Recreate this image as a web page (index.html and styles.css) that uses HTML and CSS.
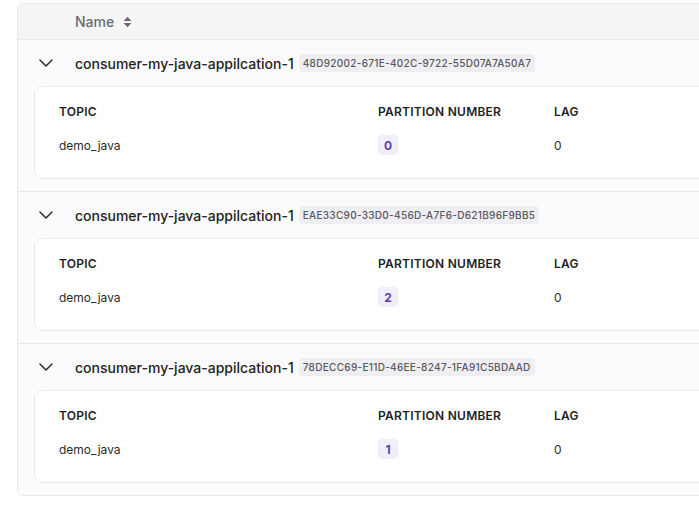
FILE: index.html
```html
<!DOCTYPE html>
<html>
<head>
<meta charset="utf-8">
<link rel="stylesheet" href="styles.css">
</head>
<body>
<div class="table">
  <div class="thead">
    <span class="th-name">Name</span>
    <svg class="sort" width="9" height="12" viewBox="0 0 9 12"><path d="M4.5 0.8 L8.4 5 H0.6 Z M4.5 11.2 L8.4 7 H0.6 Z" fill="#6b6b70"/></svg>
  </div>

  <div class="group">
    <div class="group-head">
      <svg class="chev" width="14" height="8" viewBox="0 0 14 8"><path d="M1 1 L7 7 L13 1" fill="none" stroke="#2b2b2e" stroke-width="1.5" stroke-linecap="round" stroke-linejoin="round"/></svg>
      <span class="gname">consumer-my-java-appilcation-1</span>
      <span class="gid">48D92002-671E-402C-9722-55D07A7A50A7</span>
    </div>
    <div class="card">
      <div class="row head"><span>TOPIC</span><span>PARTITION NUMBER</span><span>LAG</span></div>
      <div class="row body"><span>demo_java</span><span><span class="pbadge">0</span></span><span>0</span></div>
    </div>
  </div>

  <div class="group">
    <div class="group-head">
      <svg class="chev" width="14" height="8" viewBox="0 0 14 8"><path d="M1 1 L7 7 L13 1" fill="none" stroke="#2b2b2e" stroke-width="1.5" stroke-linecap="round" stroke-linejoin="round"/></svg>
      <span class="gname">consumer-my-java-appilcation-1</span>
      <span class="gid">EAE33C90-33D0-456D-A7F6-D621B96F9BB5</span>
    </div>
    <div class="card">
      <div class="row head"><span>TOPIC</span><span>PARTITION NUMBER</span><span>LAG</span></div>
      <div class="row body"><span>demo_java</span><span><span class="pbadge">2</span></span><span>0</span></div>
    </div>
  </div>

  <div class="group">
    <div class="group-head">
      <svg class="chev" width="14" height="8" viewBox="0 0 14 8"><path d="M1 1 L7 7 L13 1" fill="none" stroke="#2b2b2e" stroke-width="1.5" stroke-linecap="round" stroke-linejoin="round"/></svg>
      <span class="gname">consumer-my-java-appilcation-1</span>
      <span class="gid">78DECC69-E11D-46EE-8247-1FA91C5BDAAD</span>
    </div>
    <div class="card">
      <div class="row head"><span>TOPIC</span><span>PARTITION NUMBER</span><span>LAG</span></div>
      <div class="row body"><span>demo_java</span><span><span class="pbadge">1</span></span><span>0</span></div>
    </div>
  </div>
</div>
</body>
</html>
```

FILE: styles.css
```css
html, body {
  margin: 0;
  padding: 0;
  background: #ffffff;
  overflow: hidden;
}
body {
  font-family: Inter, "Noto Sans", sans-serif;
  color: #1f1f22;
  padding: 3px 0 0 17px;
}
.table {
  width: 760px;
  border: 1px solid #e9e8ec;
  border-radius: 6px;
  background: #fbfafc;
  overflow: hidden;
}
.thead {
  height: 35px;
  background: #f5f5f6;
  border-bottom: 1px solid #e9e8ec;
  display: flex;
  align-items: center;
  padding-left: 57px;
  gap: 9px;
}
.th-name {
  font-size: 14px;
  font-weight: 500;
  color: #6b6b70;
}
.sort { display: block; }
.group {
  padding: 12px 0 12px 16px;
  border-bottom: 1px solid #e9e8ec;
  display: flex;
  flex-direction: column;
  gap: 12px;
}
.group:last-child { border-bottom: none; }
.group-head {
  height: 22px;
  display: flex;
  align-items: center;
  padding-left: 5px;
}
.chev { display: block; margin-right: 22px; }
.gname {
  font-size: 14px;
  font-weight: 500;
  color: #1f1f22;
  margin-right: 5px;
}
.gid {
  font-size: 10px;
  font-weight: 500;
  letter-spacing: 0.3px;
  color: #59595f;
  background: #efeef2;
  border-radius: 4px;
  padding: 3px 4px;
  line-height: 12px;
}
.card {
  background: #ffffff;
  border: 1px solid #e9e8ec;
  border-radius: 8px;
  height: 91px;
  padding: 0 0 0 24px;
}
.row {
  display: grid;
  grid-template-columns: 319px 176px 1fr;
  align-items: center;
}
.row.head {
  height: 48px;
  font-size: 12px;
  font-weight: 600;
  letter-spacing: 0.25px;
  color: #1f1f22;
}
.row.body {
  height: 20px;
  font-size: 12px;
  color: #2b2b2e;
}
.pbadge {
  display: inline-flex;
  align-items: center;
  justify-content: center;
  min-width: 20px;
  height: 20px;
  padding: 0 5px;
  box-sizing: border-box;
  border-radius: 4px;
  background: #f1eefc;
  color: #5b3eb3;
  font-weight: 700;
  font-size: 12px;
}
```
